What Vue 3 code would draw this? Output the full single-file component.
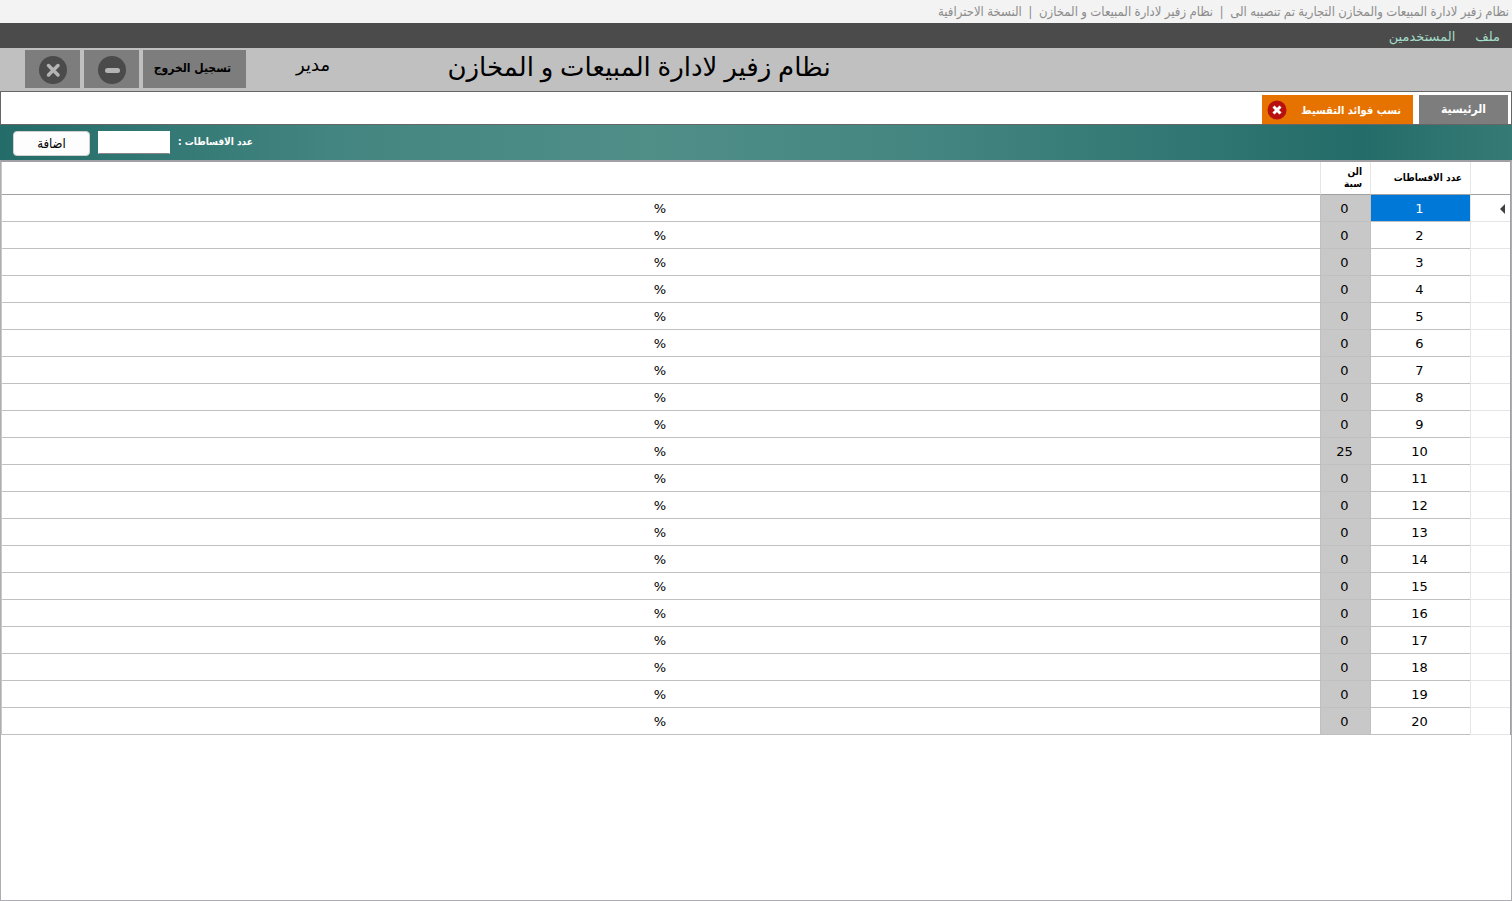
<script setup>
import { ref, reactive } from 'vue'

const count = ref('')
const current = ref(0)
const menus = ['ملف', 'المستخدمين']
const rates = reactive([])

for (let i = 1; i <= 20; i++) {
  rates.push({ count: i, rate: i === 10 ? 25 : 0 })
}

function addRate() {
  const n = parseInt(count.value)
  if (n > 0) {
    rates.push({ count: n, rate: 0 })
    count.value = ''
  }
}
</script>

<template>
  <div class="app" dir="rtl" lang="ar">
    <div class="titlebar">
      <span>نظام زفير لادارة المبيعات والمخازن التجارية تم تنصيبه الى</span>
      <span>|</span>
      <span>نظام زفير لادارة المبيعات و المخازن</span>
      <span>|</span>
      <span>النسخة الاحترافية</span>
    </div>

    <nav class="menu">
      <button v-for="item in menus" :key="item" type="button">{{ item }}</button>
    </nav>

    <header class="header">
      <h1>نظام زفير لادارة المبيعات و المخازن</h1>
      <span class="user">مدير</span>
      <div class="actions">
        <button type="button" class="logout">تسجيل الخروج</button>
        <button type="button" class="win" aria-label="تصغير">
          <svg width="28" height="28" viewBox="0 0 28 28">
            <circle cx="14" cy="14" r="14" fill="#4b4b4b" />
            <path d="M9.500 14.500H19.500" stroke="#b4b4b4" stroke-width="5" stroke-linecap="round" />
          </svg>
        </button>
        <button type="button" class="win" aria-label="اغلاق">
          <svg width="28" height="28" viewBox="0 0 28 28">
            <circle cx="14" cy="14" r="14" fill="#4b4b4b" />
            <path d="M9.500 9.500L19 19M19 9.500L9.500 19" stroke="#b4b4b4" stroke-width="3.500" stroke-linecap="round" />
          </svg>
        </button>
      </div>
    </header>

    <div class="tabs">
      <button type="button" class="tab home">الرئيسية</button>
      <div class="tab active">
        <button type="button" class="name">نسب فوائد التقسيط</button>
        <button type="button" class="close" aria-label="اغلاق التبويب">
          <svg width="20" height="20" viewBox="0 0 20 20">
            <circle cx="10" cy="10" r="9.500" fill="#b90f0f" />
            <path d="M6.500 6.500L13.500 13.500M13.500 6.500L6.500 13.500" stroke="#fff" stroke-width="3" />
          </svg>
        </button>
      </div>
    </div>

    <form class="toolbar" @submit.prevent="addRate">
      <label for="count">عدد الاقساطات :</label>
      <input id="count" v-model="count" type="text">
      <button type="submit">اضافة</button>
    </form>

    <main class="grid">
      <table>
        <colgroup>
          <col class="c-mark">
          <col class="c-count">
          <col class="c-rate">
          <col>
        </colgroup>
        <thead>
          <tr>
            <th></th>
            <th>عدد الاقساطات</th>
            <th>الن<br>سبة</th>
            <th></th>
          </tr>
        </thead>
        <tbody>
          <tr v-for="(row, index) in rates" :key="index" @click="current = index">
            <td class="mark"><svg v-if="index === current" width="5" height="10" viewBox="0 0 5 10"><path d="M5 0V10L0 5Z" fill="#404040" /></svg></td>
            <td :class="{ selected: index === current }">{{ row.count }}</td>
            <td class="rate">{{ row.rate }}</td>
            <td>%</td>
          </tr>
        </tbody>
      </table>
    </main>
  </div>
</template>

<style>
body {
  margin: 0;
  background: #fff;
}
</style>

<style scoped>
.app {
  display: flex;
  flex-direction: column;
  min-height: 100vh;
  font-family: "DejaVu Sans", sans-serif;
  font-size: 13px;
  color: #000;
}
button {
  padding: 0;
  border: 0;
  background: none;
  font-family: inherit;
  color: inherit;
  cursor: pointer;
}
svg {
  display: block;
}
.titlebar {
  display: flex;
  gap: 5px;
  height: 23px;
  padding: 0 3px;
  background: #f3f3f3;
  color: #8c8c8c;
  font-family: "Noto Sans", "DejaVu Sans Condensed", "DejaVu Sans", sans-serif;
  font-size: 13px;
  line-height: 23px;
  white-space: nowrap;
}
.menu {
  display: flex;
  gap: 20px;
  height: 25px;
  padding: 0 12px;
  background: #4b4b4b;
  color: #a3dcc8;
}
.menu button {
  padding-top: 2px;
  font-size: 13px;
}
.header {
  display: flex;
  justify-content: flex-end;
  height: 43px;
  padding-left: 25px;
  background: #c0c0c0;
}
.header h1 {
  min-width: 386px;
  margin: 0;
  font-family: "Noto Sans", "DejaVu Sans", sans-serif;
  font-size: 26px;
  font-weight: normal;
  line-height: 36px;
  text-align: center;
  white-space: nowrap;
}
.user {
  min-width: 34px;
  margin: 0 116px 0 50px;
  font-size: 18px;
  line-height: 34px;
  text-align: center;
}
.actions {
  display: flex;
  gap: 4px;
  padding: 2px 0 3px;
}
.actions button {
  display: flex;
  align-items: center;
  justify-content: center;
  background: #7d7d7d;
}
.actions .logout {
  width: 103px;
  padding: 0 4px 2px 0;
  font-family: "DejaVu Sans Condensed", "DejaVu Sans", sans-serif;
  font-size: 12px;
  font-weight: bold;
}
.actions .win {
  width: 55px;
  padding-top: 2px;
}
.tabs {
  display: flex;
  gap: 6px;
  height: 29px;
  padding: 3px 3px 0;
  border: 1px solid #666;
}
.tab {
  color: #fff;
  font-family: "DejaVu Sans Condensed", "DejaVu Sans", sans-serif;
  font-size: 12px;
  font-weight: bold;
}
.home {
  width: 89px;
  padding-bottom: 2px;
  background: #7d7d7d;
}
.active {
  display: flex;
  align-items: center;
  justify-content: space-between;
  width: 134px;
  padding: 0 12px 0 5px;
  background: #e67300;
}
.active .name {
  padding-top: 2px;
  font-size: 11px;
  font-weight: bold;
  white-space: nowrap;
}
.toolbar {
  display: flex;
  align-items: flex-start;
  justify-content: flex-end;
  gap: 8px;
  height: 29px;
  padding: 6px 13px 0;
  background: linear-gradient(90deg, #246c69 0%, #438580 22%, #508f88 43%, #438580 62%, #246c69 90%, #367a75 100%);
  color: #fff;
  font-family: "DejaVu Sans Condensed", "DejaVu Sans", sans-serif;
}
.toolbar label {
  font-size: 10px;
  font-weight: bold;
  line-height: 22px;
}
.toolbar input {
  box-sizing: border-box;
  width: 72px;
  height: 23px;
  padding: 0 4px;
  border: 1px solid #fff;
  border-bottom-color: #868686;
  background: #fff;
  font: inherit;
}
.toolbar button {
  width: 77px;
  height: 25px;
  border: 1px solid #d0d0d0;
  border-radius: 4px;
  background: #fdfdfd;
  color: #000;
  font-size: 13px;
}
.grid {
  flex: 1;
  border: 1px solid #adadb3;
  border-top: 2px solid #a0a0a5;
}
table {
  width: 100%;
  table-layout: fixed;
  border-collapse: separate;
  border-spacing: 0;
  border-right: 1px solid #a0a0a0;
  border-left: 1px solid #c8c8c8;
}
.c-mark {
  width: 40px;
}
.c-count {
  width: 100px;
}
.c-rate {
  width: 50px;
}
th {
  height: 32px;
  padding: 0 8px;
  border-bottom: 1px solid #a0a0a0;
  border-left: 1px solid #e5e5e5;
  font-family: "DejaVu Sans Condensed", "DejaVu Sans", sans-serif;
  font-size: 10px;
  line-height: 12px;
  text-align: right;
  white-space: nowrap;
}
td {
  height: 24px;
  padding: 2px 2px 0 0;
  border-bottom: 1px solid #c0c0c0;
  border-left: 1px solid #c0c0c0;
  line-height: 24px;
  text-align: center;
}
th:last-child,
td:last-child {
  border-left: 0;
}
td.mark {
  padding-right: 5px;
  border-color: #e5e5e5;
}
td.rate {
  background: #c8c8c8;
}
td.selected {
  background: #0078d7;
  color: #fff;
}
</style>
